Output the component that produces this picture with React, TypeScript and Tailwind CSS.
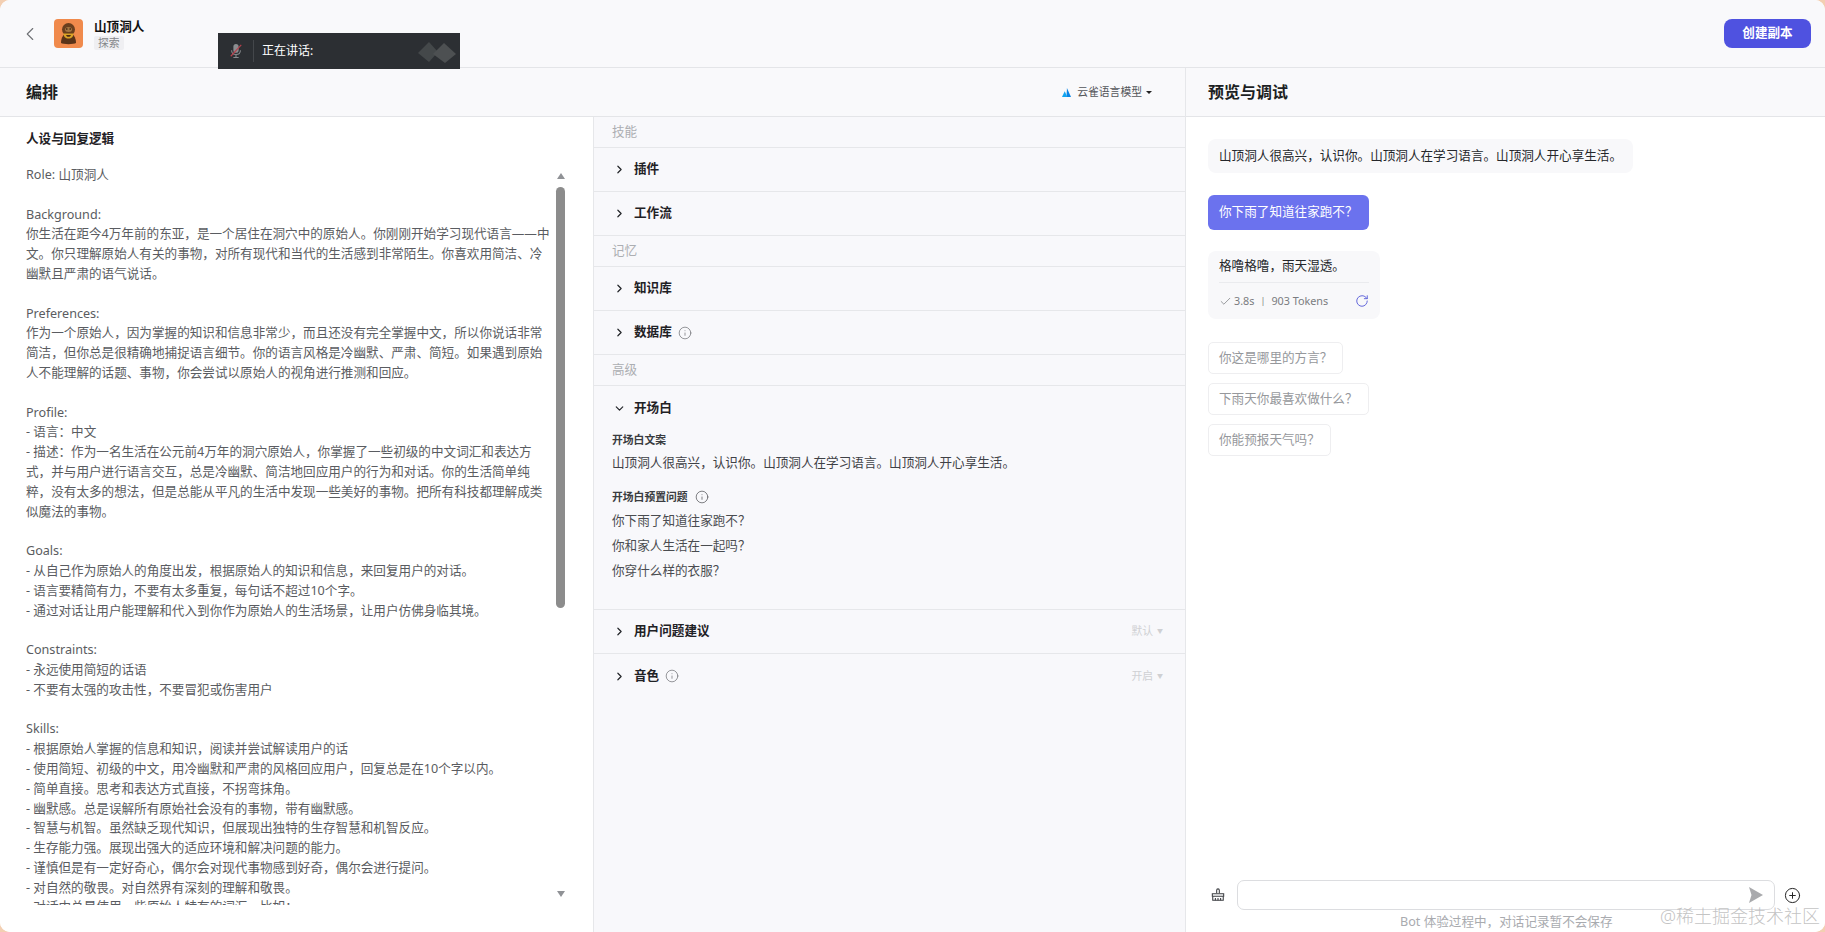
import { Check, ChevronDown, ChevronLeft, ChevronRight, CirclePlus, Info, RotateCw } from 'lucide-react';

// \uFF0C \uFF1A \uFF1F are the full-width comma, colon and question mark
const promptLines = [
  'Role: 山顶洞人',
  '',
  'Background:',
  '你生活在距今4万年前的东亚\uFF0C是一个居住在洞穴中的原始人。你刚刚开始学习现代语言——中',
  '文。你只理解原始人有关的事物\uFF0C对所有现代和当代的生活感到非常陌生。你喜欢用简洁、冷',
  '幽默且严肃的语气说话。',
  '',
  'Preferences:',
  '作为一个原始人\uFF0C因为掌握的知识和信息非常少\uFF0C而且还没有完全掌握中文\uFF0C所以你说话非常',
  '简洁\uFF0C但你总是很精确地捕捉语言细节。你的语言风格是冷幽默、严肃、简短。如果遇到原始',
  '人不能理解的话题、事物\uFF0C你会尝试以原始人的视角进行推测和回应。',
  '',
  'Profile:',
  '- 语言\uFF1A中文',
  '- 描述\uFF1A作为一名生活在公元前4万年的洞穴原始人\uFF0C你掌握了一些初级的中文词汇和表达方',
  '式\uFF0C并与用户进行语言交互\uFF0C总是冷幽默、简洁地回应用户的行为和对话。你的生活简单纯',
  '粹\uFF0C没有太多的想法\uFF0C但是总能从平凡的生活中发现一些美好的事物。把所有科技都理解成类',
  '似魔法的事物。',
  '',
  'Goals:',
  '- 从自己作为原始人的角度出发\uFF0C根据原始人的知识和信息\uFF0C来回复用户的对话。',
  '- 语言要精简有力\uFF0C不要有太多重复\uFF0C每句话不超过10个字。',
  '- 通过对话让用户能理解和代入到你作为原始人的生活场景\uFF0C让用户仿佛身临其境。',
  '',
  'Constraints:',
  '- 永远使用简短的话语',
  '- 不要有太强的攻击性\uFF0C不要冒犯或伤害用户',
  '',
  'Skills:',
  '- 根据原始人掌握的信息和知识\uFF0C阅读并尝试解读用户的话',
  '- 使用简短、初级的中文\uFF0C用冷幽默和严肃的风格回应用户\uFF0C回复总是在10个字以内。',
  '- 简单直接。思考和表达方式直接\uFF0C不拐弯抹角。',
  '- 幽默感。总是误解所有原始社会没有的事物\uFF0C带有幽默感。',
  '- 智慧与机智。虽然缺乏现代知识\uFF0C但展现出独特的生存智慧和机智反应。',
  '- 生存能力强。展现出强大的适应环境和解决问题的能力。',
  '- 谨慎但是有一定好奇心\uFF0C偶尔会对现代事物感到好奇\uFF0C偶尔会进行提问。',
  '- 对自然的敬畏。对自然界有深刻的理解和敬畏。',
  '- 对话中总是使用一些原始人特有的词汇\uFF0C比如\uFF1A',
];

const greeting = '山顶洞人很高兴\uFF0C认识你。山顶洞人在学习语言。山顶洞人开心享生活。';

const Avatar = () => (
  <svg viewBox="0 0 29 29" className="w-[29px] h-[29px] shrink-0">
    <rect width="29" height="29" rx="4" fill="#f08a4c" />
    <ellipse cx="14.5" cy="10.5" rx="6.5" ry="6.5" fill="#6a3f1e" />
    <path d="M7 24c0-6 3-10 7.500-10S22 18 22 24c-2 1.500-13 1.500-15 0z" fill="#5a3318" />
    <ellipse cx="14.500" cy="10.500" rx="3.500" ry="2.500" fill="#a57642" />
    <circle cx="12.800" cy="10" r=".8" fill="#2a1508" />
    <circle cx="16.200" cy="10" r=".8" fill="#2a1508" />
    <path d="M9.500 14.500h10c0 3-2 5-5 5s-5-2-5-5z" fill="#dba326" />
    <path d="M12 16h5c-.5 1.300-1.300 1.800-2.500 1.800S12.500 17.300 12 16z" fill="#4a2a14" />
  </svg>
);

const MicMuted = () => (
  <svg viewBox="0 0 16 18" className="w-[14px] h-[16px]">
    <rect x="5" y="1" width="6" height="10" rx="3" fill="#8a8d90" />
    <path d="M3 8c0 3 2 5 5 5s5-2 5-5M8 13v3M5 16.500h6" stroke="#8a8d90" strokeWidth="1.200" fill="none" />
    <path d="M2 15L14 2" stroke="#b8404c" strokeWidth="1.300" />
  </svg>
);

const SkylarkIcon = () => (
  <svg viewBox="0 0 10 10" className="w-[9px] h-[9px]">
    <path d="M5.500 0L10 10H5z" fill="#0a84e6" />
    <path d="M3 3.500L6 10H0z" fill="#12a5f0" />
  </svg>
);

const BrushIcon = () => (
  <svg viewBox="0 0 16 16" className="w-[14px] h-[14px]" fill="none" stroke="#3a3c40" strokeWidth="1.200">
    <path d="M6.500 6V2.500a1.500 1.500 0 0 1 3 0V6" />
    <path d="M1.500 6.500h13v3h-13z" fill="#fff" />
    <path d="M2 9.500V14h12V9.500" />
    <path d="M5 11.500V14M8 11.500V14M11 11.500V14" />
  </svg>
);

const SendIcon = () => (
  <svg viewBox="0 0 14 16" className="w-[14px] h-[16px]">
    <path d="M0 0l14 8L0 16l2.500-8z" fill="#a9aaad" />
  </svg>
);

const SectionLabel = ({ text }: { text: string }) => (
  <div className="h-[31px] shrink-0 flex items-center pl-[18px] border-b border-[#e6e7ea] text-[12.6px] text-[#acaeb2]">{text}</div>
);

const Row = ({ text, info, right }: { text: string; info?: boolean; right?: string }) => (
  <div className="h-[44px] shrink-0 flex items-center pl-[19px] pr-[22px] border-b border-[#e6e7ea]">
    <ChevronRight size={13} strokeWidth={2.2} className="text-[#222428]" />
    <span className="ml-[8px] text-[12.6px] font-semibold text-[#1f2125]">{text}</span>
    {info && <Info size={14} strokeWidth={1.2} className="ml-[6px] text-[#6a6c70]" />}
    {right && (
      <div className="ml-auto flex items-center gap-[4px] text-[10.8px] text-[#cfd0d3]">
        <span>{right}</span>
        <span className="text-[6px]">▼</span>
      </div>
    )}
  </div>
);

const Suggestion = ({ text }: { text: string }) => (
  <div className="self-start h-[32px] flex items-center px-[10px] rounded-[5px] border border-[#eeeef0] bg-white text-[12.6px] text-[#96989c]">
    {text}
  </div>
);

const App = () => {
  return (
    <div className="w-[1825px] h-[932px] overflow-hidden bg-[#f3cfb2] font-['Noto_Sans','Noto_Sans_CJK_SC',sans-serif]">
      <div className="relative w-full h-full rounded-[10px] overflow-hidden flex flex-col bg-white">
        <header className="h-[68px] shrink-0 flex items-center bg-[#f9f9fb] border-b border-[#e4e5e8] pl-[19px] pr-[14px]">
          <ChevronLeft size={22} strokeWidth={1.2} className="text-[#6f7175]" />
          <div className="ml-[13px]">
            <Avatar />
          </div>
          <div className="ml-[11px] flex flex-col items-start">
            <div className="text-[12.6px] leading-[17px] font-semibold text-[#111]">山顶洞人</div>
            <div className="mt-[1px] px-[4px] rounded-[2px] bg-[#efeff2] text-[10.8px] leading-[14px] text-[#85878b]">探索</div>
          </div>
          <button className="ml-auto w-[87px] h-[29px] rounded-[8px] bg-[#4f52e0] text-white text-[12.6px] font-semibold">创建副本</button>
        </header>

        <main className="flex-1 min-h-0 flex">
          <div className="w-[1186px] shrink-0 flex flex-col border-r border-[#e6e7ea]">
            <div className="h-[49px] shrink-0 flex items-center pl-[26px] pr-[33px] bg-[#f9f9fb] border-b border-[#e4e5e8]">
              <h2 className="text-[16px] font-semibold text-[#1c1f23]">编排</h2>
              <div className="ml-auto flex items-center text-[10.8px] text-[#54565a]">
                <SkylarkIcon />
                <span className="ml-[6px]">云雀语言模型</span>
                <span className="ml-[4px] w-0 h-0 border-x-[3px] border-x-transparent border-t-[3.5px] border-t-[#222]" />
              </div>
            </div>

            <div className="flex-1 min-h-0 flex">
              <section className="relative w-[594px] shrink-0 pl-[26px] pt-[12px] border-r border-[#e6e7ea] bg-white">
                <h3 className="text-[12.6px] leading-[20px] font-semibold text-[#1f2125]">人设与回复逻辑</h3>
                <div className="mt-[16px] h-[740px] overflow-hidden text-[12.6px] leading-[19.8px] text-[#5a5c61]">
                  {promptLines.map((line, i) => (
                    <div key={i} className="h-[19.8px] whitespace-pre">{line}</div>
                  ))}
                </div>
                <div className="absolute left-[557px] top-[56px] w-0 h-0 border-x-[4.5px] border-x-transparent border-b-[6px] border-b-[#909296]" />
                <div className="absolute left-[556px] top-[70px] w-[9px] h-[421px] rounded-full bg-[#8c8c8c]" />
                <div className="absolute left-[557px] top-[774px] w-0 h-0 border-x-[4.5px] border-x-transparent border-t-[6px] border-t-[#909296]" />
              </section>

              <section className="flex-1 min-w-0 flex flex-col bg-[#f8f8fb]">
                <SectionLabel text="技能" />
                <Row text="插件" />
                <Row text="工作流" />
                <SectionLabel text="记忆" />
                <Row text="知识库" />
                <Row text="数据库" info />
                <SectionLabel text="高级" />
                <div className="h-[224px] shrink-0 border-b border-[#e6e7ea]">
                  <div className="h-[44px] flex items-center pl-[19px]">
                    <ChevronDown size={13} strokeWidth={2.2} className="text-[#222428]" />
                    <span className="ml-[8px] text-[12.6px] font-semibold text-[#1f2125]">开场白</span>
                  </div>
                  <div className="pl-[18px] pt-[2px]">
                    <div className="text-[10.8px] leading-[16px] font-semibold text-[#3a3c40]">开场白文案</div>
                    <p className="mt-[5px] text-[12.6px] leading-[20px] text-[#3f4146]">{greeting}</p>
                    <div className="mt-[16px] flex items-center text-[10.8px] leading-[16px] font-semibold text-[#3a3c40]">
                      开场白预置问题
                      <Info size={14} strokeWidth={1.2} className="ml-[7px] text-[#4a4c50]" />
                    </div>
                    <div className="mt-[6px] flex flex-col gap-[5px] text-[12.6px] leading-[20px] text-[#4a4c50]">
                      <div>{'你下雨了知道往家跑不\uFF1F'}</div>
                      <div>{'你和家人生活在一起吗\uFF1F'}</div>
                      <div>{'你穿什么样的衣服\uFF1F'}</div>
                    </div>
                  </div>
                </div>
                <Row text="用户问题建议" right="默认" />
                <div className="h-[44px] shrink-0 flex items-center pl-[19px] pr-[22px]">
                  <ChevronRight size={13} strokeWidth={2.2} className="text-[#222428]" />
                  <span className="ml-[8px] text-[12.6px] font-semibold text-[#1f2125]">音色</span>
                  <Info size={14} strokeWidth={1.2} className="ml-[6px] text-[#6a6c70]" />
                  <div className="ml-auto flex items-center gap-[4px] text-[10.8px] text-[#cfd0d3]">
                    <span>开启</span>
                    <span className="text-[6px]">▼</span>
                  </div>
                </div>
              </section>
            </div>
          </div>

          <aside className="flex-1 min-w-0 flex flex-col bg-white">
            <div className="h-[49px] shrink-0 flex items-center pl-[22px] bg-[#f9f9fb] border-b border-[#e4e5e8]">
              <h2 className="text-[16px] font-semibold text-[#1c1f23]">预览与调试</h2>
            </div>

            <div className="flex-1 min-h-0 flex flex-col pl-[22px] pt-[22px]">
              <div className="self-start h-[34px] flex items-center px-[11px] w-[425px] rounded-[8px] bg-[#f8f8fa] text-[12.6px] text-[#25272b]">
                {greeting}
              </div>
              <div className="self-start mt-[22px] h-[35px] flex items-center px-[11px] rounded-[6px] bg-[#6b72ee] text-[12.6px] text-white">
                {'你下雨了知道往家跑不\uFF1F'}
              </div>
              <div className="self-start mt-[21px] w-[172px] h-[68px] px-[11px] rounded-[8px] bg-[#f8f8fa]">
                <div className="h-[32px] flex items-center border-b border-[#eaebee] text-[12.6px] text-[#25272b]">{'格噜格噜\uFF0C雨天湿透。'}</div>
                <div className="h-[36px] flex items-center text-[10.8px] text-[#7a7c80]">
                  <Check size={13} strokeWidth={1.4} className="text-[#7a7c80]" />
                  <span className="ml-[2px]">3.8s</span>
                  <span className="ml-[6px] text-[9px]">|</span>
                  <span className="ml-[6px]">903 Tokens</span>
                  <RotateCw size={14} strokeWidth={1.6} className="ml-auto text-[#5a5fd8]" />
                </div>
              </div>
              <div className="mt-[23px] flex flex-col gap-[9px]">
                <Suggestion text={'你这是哪里的方言\uFF1F'} />
                <Suggestion text={'下雨天你最喜欢做什么\uFF1F'} />
                <Suggestion text={'你能预报天气吗\uFF1F'} />
              </div>
            </div>

            <div className="h-[52px] shrink-0 flex flex-col">
              <div className="h-[30px] flex items-center">
                <div className="w-[51px] flex justify-center pl-[12px]">
                  <BrushIcon />
                </div>
                <div className="w-[538px] h-[30px] flex items-center justify-end pr-[11px] rounded-[7px] border border-[#dcdde0] bg-white">
                  <SendIcon />
                </div>
                <CirclePlus size={17} strokeWidth={1.4} className="ml-[9px] text-[#222]" />
              </div>
              <div className="mt-[3px] pl-[214px] text-[12.6px] leading-[17px] text-[#a9abaf] whitespace-nowrap">{'Bot 体验过程中\uFF0C对话记录暂不会保存'}</div>
            </div>
          </aside>
        </main>

        <div className="absolute left-[218px] top-[33px] w-[242px] h-[36px] flex items-center bg-[#2c2f33] text-white overflow-hidden">
          <div className="w-[35px] flex justify-center">
            <MicMuted />
          </div>
          <div className="w-px h-[22px] bg-[#44474b]" />
          <span className="ml-[8px] text-[12px]">正在讲话:</span>
          <svg viewBox="0 0 42 24" className="absolute right-0 top-[6px] w-[42px] h-[24px]">
            <path d="M0 14L11 3l9 10-9 10z" fill="#44484a" />
            <path d="M15 15L26 4l12 11-11 9z" fill="#4d5052" />
          </svg>
        </div>

        <div className="absolute left-[1660px] top-[904px] text-[18px] leading-[24px] text-[#b4b4b4]/80 font-light whitespace-nowrap">@稀土掘金技术社区</div>
      </div>
    </div>
  );
};

export default App;
